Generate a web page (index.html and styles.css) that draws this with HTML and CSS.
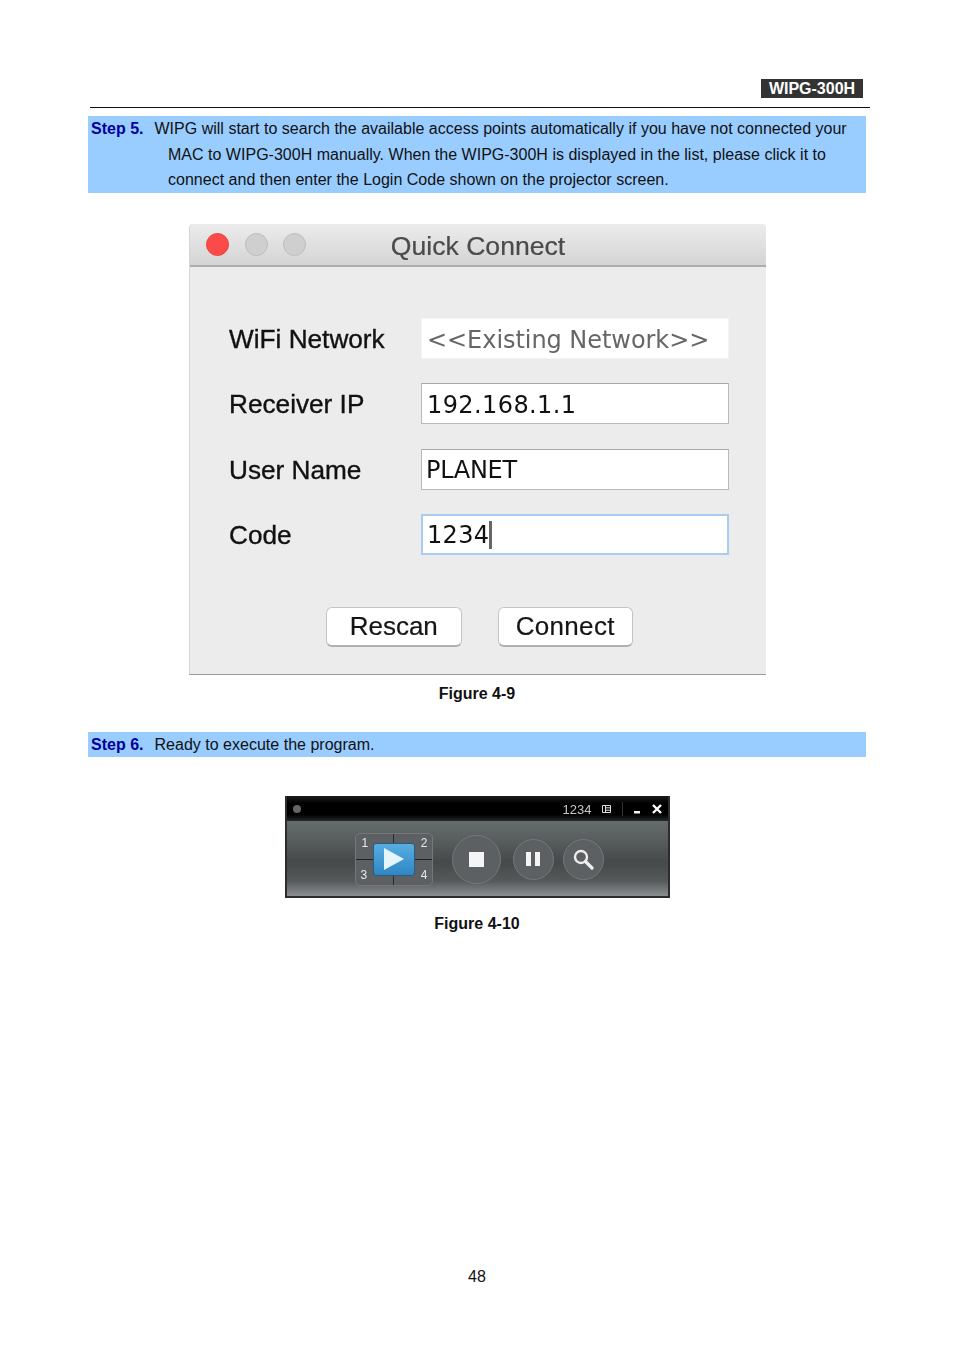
FILE: index.html
```html
<!DOCTYPE html>
<html lang="en">
<head>
<meta charset="utf-8">
<title>WIPG-300H</title>
<link rel="stylesheet" href="styles.css">
</head>
<body>
<div class="page">
  <header class="head">
    <span class="badge">WIPG-300H</span>
  </header>

  <section class="step step-five">
    <p class="line"><b class="step-no">Step 5.</b><span class="first">WIPG will start to search the available access points automatically if you have not connected your</span></p>
    <p class="line cont">MAC to WIPG-300H manually. When the WIPG-300H is displayed in the list, please click it to</p>
    <p class="line cont">connect and then enter the Login Code shown on the projector screen.</p>
  </section>

  <div class="dialog">
    <div class="titlebar">
      <div class="lights">
        <i class="light red"></i><i class="light"></i><i class="light"></i>
      </div>
      <div class="title">Quick Connect</div>
    </div>
    <div class="form">
      <label class="lab">WiFi Network</label>
      <div class="field ghost">&lt;&lt;Existing Network&gt;&gt;</div>
      <label class="lab">Receiver IP</label>
      <div class="field ip">192.168.1.1</div>
      <label class="lab">User Name</label>
      <div class="field plain">PLANET</div>
      <label class="lab">Code</label>
      <div class="field focus">1234<i class="caret"></i></div>
    </div>
    <div class="buttons">
      <div class="btn">Rescan</div>
      <div class="btn wide">Connect</div>
    </div>
  </div>
  <div class="caption cap-nine">Figure 4-9</div>

  <section class="step step-six">
    <p class="line"><b class="step-no">Step 6.</b><span class="first">Ready to execute the program.</span></p>
  </section>

  <div class="player">
    <div class="pl-top">
      <i class="dot"></i>
      <span class="pl-code">1234</span>
      <svg class="pl-list" width="9" height="8" viewBox="0 0 9 8"><path d="M.5.5h8v7h-8zM3.500.5v7M3.500 2.800h5M3.500 5.200h5" fill="none" stroke="#ddd"/></svg>
      <i class="pl-sep"></i>
      <svg class="pl-min" width="7" height="10" viewBox="0 0 7 10"><path d="M0 7h6v2.500H0z" fill="#f2f2f2"/></svg>
      <svg class="pl-x" width="10" height="10" viewBox="0 0 10 10"><path d="M1 1l8 8M9 1l-8 8" stroke="#fff" stroke-width="2.400"/></svg>
    </div>
    <div class="pl-body">
      <div class="quad">
        <span class="q q1">1</span><span class="q q2">2</span><span class="q q3">3</span><span class="q q4">4</span>
        <div class="play">
          <svg width="20" height="22" viewBox="0 0 20 22"><path d="M0 0l20 11L0 22z" fill="#e6f4fc"/></svg>
        </div>
      </div>
      <div class="round big">
        <svg width="15" height="15" viewBox="0 0 15 15"><path d="M0 0h15v15H0z" fill="#f4f4f4"/></svg>
      </div>
      <div class="round">
        <svg width="14" height="14" viewBox="0 0 14 14"><path d="M0 0h5v14H0zM9 0h5v14H9z" fill="#f4f4f4"/></svg>
      </div>
      <div class="round">
        <svg width="21" height="21" viewBox="0 0 21 21"><circle cx="8" cy="8" r="6" fill="none" stroke="#eee" stroke-width="2.400"/><path d="M12.500 12.500l6.500 6.500" stroke="#eee" stroke-width="3.200" stroke-linecap="round"/></svg>
      </div>
    </div>
  </div>
  <div class="caption cap-ten">Figure 4-10</div>

  <footer class="foot">48</footer>
</div>
</body>
</html>
```

FILE: styles.css
```css
* { box-sizing: border-box; }
html, body { margin: 0; padding: 0; background: #fff; }
body { font-family: "Liberation Sans", Arial, sans-serif; color: #111; }

.page {
  width: 954px;
  height: 1350px;
  display: flex;
  flex-direction: column;
  padding-top: 79px;
}

/* header */
.head {
  margin: 0 84px 0 90px;
  height: 29px;
  border-bottom: 1px solid #111;
  display: flex;
  justify-content: flex-end;
  align-items: flex-start;
  padding-right: 7px;
}
.badge {
  width: 102px;
  height: 19px;
  background: #333;
  color: #fff;
  font-weight: 700;
  font-size: 16px;
  line-height: 19px;
  text-align: center;
}

/* blue step bars */
.step { margin: 0 88px; background: #99ccff; }
.step-five { margin-top: 8px; height: 77px; }
.step-six { margin-top: 28px; height: 25px; }
.line {
  margin: 0;
  height: 25.500px;
  font-size: 16px;
  line-height: 25.500px;
  letter-spacing: .012px;
  white-space: nowrap;
}
.step-no { display: inline-block; width: 66.500px; padding-left: 3px; color: #000099; font-weight: 700; }
.cont { padding-left: 80px; }

/* Quick Connect dialog */
.dialog {
  align-self: flex-start;
  margin: 31px 0 0 189px;
  width: 577px;
  height: 451px;
  background: #ececec;
  border-left: 1px solid #d6d6d6;
  border-bottom: 1px solid #9a9a9a;
  border-radius: 4px 4px 0 0;
  display: flex;
  flex-direction: column;
  filter: blur(.45px);
}
.titlebar {
  height: 43px;
  flex: none;
  position: relative;
  background: linear-gradient(#ececec, #d4d4d4);
  border-bottom: 2px solid #adadad;
  border-radius: 4px 4px 0 0;
  display: flex;
  align-items: center;
  justify-content: center;
}
.lights {
  position: absolute;
  left: 16px;
  top: 9px;
  display: flex;
  gap: 15.500px;
}
.light {
  width: 23px;
  height: 23px;
  border-radius: 50%;
  background: #cfcfcf;
  border: 1px solid #bdbdbd;
}
.light.red { background: #fb4a48; border-color: #e8443f; }
.title {
  font-size: 26.600px;
  color: #4a4a4a;
  margin-top: 4px;
  -webkit-text-stroke: .2px #4a4a4a;
}
.form {
  display: grid;
  grid-template-columns: 192px 308px;
  grid-auto-rows: 41px;
  row-gap: 24.300px;
  margin: 51px 0 0 39px;
  align-items: start;
}
.lab {
  font-size: 26.200px;
  line-height: 41px;
  padding-top: 1px;
  color: #111;
  white-space: nowrap;
  -webkit-text-stroke: .35px #111;
}
.field {
  height: 41px;
  background: #fff;
  border: 1px solid #b9b9b9;
  border-top-color: #a8a8a8;
  font-family: "DejaVu Sans", sans-serif;
  font-size: 24px;
  color: #111;
  padding: 2px 0 0 5px;
  white-space: nowrap;
  display: flex;
  align-items: center;
}
.field.ip { letter-spacing: .4px; }
.field.plain { padding-left: 4px; letter-spacing: -.3px; }
.field.ghost {
  border-color: #f4f4f4;
  color: #666;
  letter-spacing: -.05px;
}
.field.focus {
  border: 2px solid #a9cdf0;
  padding-left: 4px;
  letter-spacing: .3px;
}
.caret {
  display: block;
  width: 3px;
  height: 28px;
  background: #666;
}
.buttons {
  display: flex;
  gap: 36px;
  margin: 52px 0 0 136px;
}
.btn {
  width: 135.500px;
  height: 40px;
  background: #fff;
  border: 1px solid #c4c4c4;
  border-bottom: 2px solid #b0b0b0;
  border-radius: 6px;
  font-size: 26px;
  line-height: 36px;
  text-align: center;
  color: #151515;
  -webkit-text-stroke: .2px #151515;
}
.btn.wide { letter-spacing: .3px; }

/* captions */
.caption {
  text-align: center;
  font-weight: 700;
  font-size: 16px;
  line-height: 20px;
}
.cap-nine { margin-top: 9px; }
.cap-ten { margin-top: 16px; }

/* player */
.player {
  align-self: flex-start;
  margin: 39px 0 0 284.500px;
  width: 385px;
  height: 102px;
  background: #2a2c2d;
  display: flex;
  flex-direction: column;
  padding: 0 2px 2px;
  filter: blur(.4px);
}
.pl-top {
  height: 25px;
  flex: none;
  background: linear-gradient(#1c1c1c, #000 30%, #000 75%, #262a2a);
  display: flex;
  align-items: center;
  padding: 1px 6px 0;
  color: #ddd;
}
.dot { width: 8px; height: 8px; border-radius: 50%; background: #666; }
.pl-code { margin-left: auto; font-size: 13px; color: #c8c8c8; }
.pl-list { margin-left: 10px; }
.pl-sep { width: 1px; height: 14px; background: #333; margin: 0 11px; }
.pl-min { margin-right: 11px; }
.pl-body {
  flex: 1;
  background: linear-gradient(#666b6d 0%, #585d5e 25%, #45494a 55%, #55595a 80%, #8b8f91 100%);
  display: flex;
  align-items: center;
  padding-left: 68px;
  padding-top: 1px;
}
.quad {
  width: 78px;
  height: 53px;
  position: relative;
  border: 1px solid #74787a;
  border-radius: 5px;
  background:
    linear-gradient(#2a2a2a, #2a2a2a) center / 1px 100% no-repeat,
    linear-gradient(#222, #222) center / 100% 1px no-repeat,
    #5c6062;
}
.q {
  position: absolute;
  font-size: 12px;
  line-height: 14px;
  color: #e8e8e8;
}
.q1 { left: 6px; top: 2px; }
.q2 { right: 4px; top: 2px; }
.q3 { left: 5px; bottom: 3px; }
.q4 { right: 4px; bottom: 3px; }
.play {
  position: absolute;
  left: 17px;
  top: 9px;
  width: 42px;
  height: 33px;
  border: 1px solid #2c5a7c;
  border-radius: 3px;
  background: linear-gradient(#58aee2, #2f86c4);
  display: flex;
  align-items: center;
  justify-content: center;
}
.round {
  width: 41px;
  height: 41px;
  flex: none;
  margin-left: 9px;
  border-radius: 50%;
  border: 1.500px solid #74787a;
  background: #5c6062;
  display: flex;
  align-items: center;
  justify-content: center;
}
.round.big {
  width: 49px;
  height: 49px;
  margin-left: 19px;
  margin-right: 3px;
}

/* page number */
.foot {
  margin-top: auto;
  margin-bottom: 63px;
  text-align: center;
  font-size: 16px;
  line-height: 20px;
}
```
